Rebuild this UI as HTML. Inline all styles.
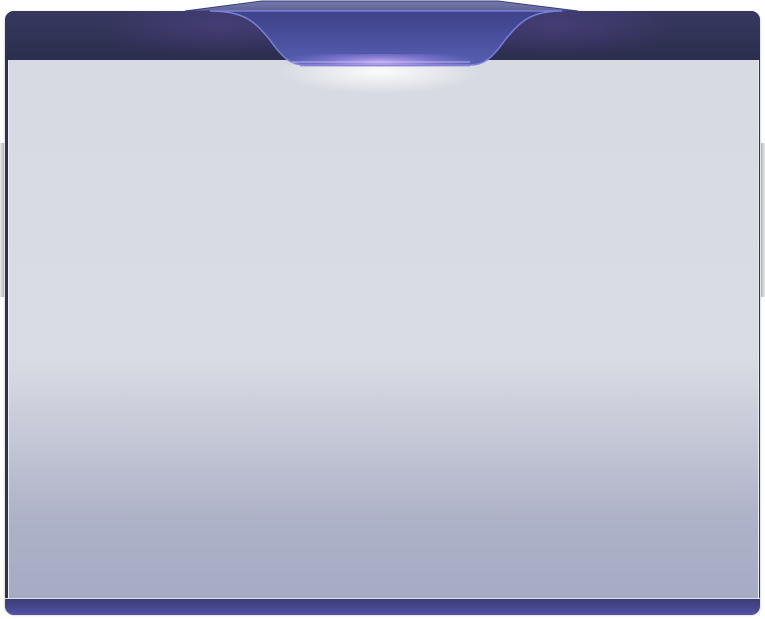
<!DOCTYPE html>
<html><head><meta charset="utf-8"><style>
html,body{margin:0;padding:0;background:#fff;width:765px;height:619px;overflow:hidden;position:relative}
.side{position:absolute;top:143px;width:4px;height:154px;background:linear-gradient(90deg,#e8e8ea,#b8b8bc)}
.frame{position:absolute;left:5px;top:11px;width:755px;height:603px;border-radius:9px;background:#2f3152;box-shadow:0 1px 2px rgba(0,0,0,.3)}
.hdr{position:absolute;left:5px;top:11px;width:755px;height:49px;border-radius:9px 9px 0 0;
background:radial-gradient(ellipse 120px 30px at 215px 15px,rgba(90,70,150,.45),transparent),radial-gradient(ellipse 120px 30px at 550px 15px,rgba(90,70,150,.45),transparent),linear-gradient(#363860,#2c2e4e)}
.panel{position:absolute;left:8px;top:60px;width:749px;height:538px;
background:linear-gradient(#d7dae2 0%,#dadce4 55%,#c5c8d6 70%,#aeb2c8 85%,#a6abc4 100%);border-left:1px solid #eceef3;border-right:1px solid #eceef3}
.bot{position:absolute;left:5px;top:598px;width:755px;height:16px;border-radius:0 0 9px 9px;background:linear-gradient(#3c3c74,#4a4a96 70%,#5555aa);border-top:1px solid #dfe2ee}
.glow{position:absolute;left:260px;top:60px;width:240px;height:50px;background:radial-gradient(ellipse 100px 22px at 120px 12px,rgba(255,255,255,.9),rgba(255,255,255,0))}
svg{position:absolute;left:0;top:0}
</style></head><body>
<div class="side" style="left:0"></div>
<div class="side" style="left:761px;background:linear-gradient(90deg,#b8b8bc,#e8e8ea)"></div>
<div class="frame"></div>
<div class="hdr"></div>
<div class="panel"></div>
<div class="bot"></div>
<div class="glow"></div>
<svg width="765" height="100" viewBox="0 0 765 100">
<defs>
<linearGradient id="t" x1="0" y1="0" x2="0" y2="1">
<stop offset="0" stop-color="#3e4288"/><stop offset=".5" stop-color="#4a4f9e"/><stop offset="1" stop-color="#5560b0"/></linearGradient>
<linearGradient id="tt" x1="0" y1="0" x2="0" y2="1"><stop offset="0" stop-color="#767aaa"/><stop offset="1" stop-color="#5e6296"/></linearGradient>
<radialGradient id="g" cx="380" cy="62" r="100" gradientUnits="userSpaceOnUse" gradientTransform="translate(0,62) scale(1,0.12) translate(0,-62)">
<stop offset="0" stop-color="#e0c0ff" stop-opacity=".8"/><stop offset="1" stop-color="#a080ff" stop-opacity="0"/></radialGradient>
</defs>
<path d="M185 11 L262 1 L498 1 L578 11 Z" fill="url(#tt)" stroke="#3a3e80" stroke-width="1"/>
<path d="M210 11 C245 11 255 22 270 40 C283 59 292 65 305 65 L470 65 C483 65 492 59 505 40 C520 22 530 11 562 11 Z" fill="url(#t)" stroke="#7a80d8" stroke-width="1.5"/>
<rect x="270" y="54" width="220" height="11" fill="url(#g)"/>
<line x1="292" y1="62" x2="470" y2="62" stroke="#c8c8f4" stroke-width="1" opacity=".8"/>
<line x1="300" y1="66" x2="470" y2="66" stroke="#8060d0" stroke-width="1" opacity=".6"/>
</svg>
</body></html>
